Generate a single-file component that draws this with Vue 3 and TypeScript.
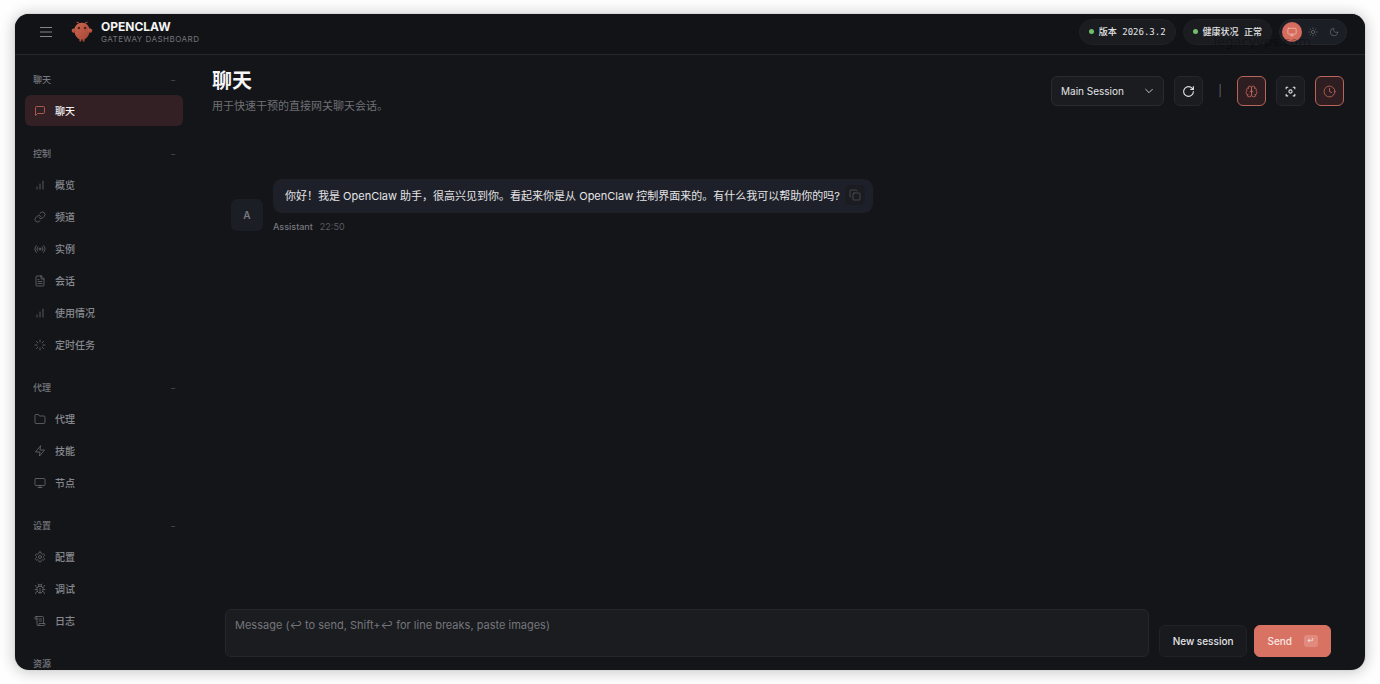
<script setup lang="ts">
import { ref } from 'vue'

interface NavItem {
  label: string
  icon: string
}
interface NavGroup {
  title: string
  items: NavItem[]
}

const icons: Record<string, string[]> = {
  message: ['M21 15a2 2 0 0 1-2 2H7l-4 4V5a2 2 0 0 1 2-2h14a2 2 0 0 1 2 2z'],
  bars: ['M12 20V10', 'M18 20V4', 'M6 20v-4'],
  link: [
    'M10 13a5 5 0 0 0 7.54.54l3-3a5 5 0 0 0-7.07-7.07l-1.72 1.71',
    'M14 11a5 5 0 0 0-7.54-.54l-3 3a5 5 0 0 0 7.07 7.07l1.71-1.71',
  ],
  radio: [
    'M4.9 19.1C1 15.2 1 8.8 4.9 4.9',
    'M7.8 16.2c-2.3-2.3-2.3-6.1 0-8.5',
    'M14 12a2 2 0 1 1-4 0a2 2 0 0 1 4 0',
    'M16.2 7.8c2.3 2.3 2.3 6.1 0 8.5',
    'M19.1 4.9C23 8.8 23 15.1 19.1 19',
  ],
  file: [
    'M14.5 2H6a2 2 0 0 0-2 2v16a2 2 0 0 0 2 2h12a2 2 0 0 0 2-2V7.5L14.5 2z',
    'M14 2v6h6',
    'M16 13H8',
    'M16 17H8',
    'M10 9H8',
  ],
  loader: [
    'M12 2v4',
    'M12 18v4',
    'M4.93 4.93l2.83 2.83',
    'M16.24 16.24l2.83 2.83',
    'M2 12h4',
    'M18 12h4',
    'M4.93 19.07l2.83-2.83',
    'M16.24 7.76l2.83-2.83',
  ],
  folder: ['M22 19a2 2 0 0 1-2 2H4a2 2 0 0 1-2-2V5a2 2 0 0 1 2-2h5l2 3h9a2 2 0 0 1 2 2z'],
  zap: ['M13 2L3 14h9l-1 8 10-12h-9l1-8z'],
  monitor: ['M4 3h16a2 2 0 0 1 2 2v10a2 2 0 0 1-2 2H4a2 2 0 0 1-2-2V5a2 2 0 0 1 2-2z', 'M8 21h8', 'M12 17v4'],
  settings: [
    'M12.22 2h-.44a2 2 0 0 0-2 2v.18a2 2 0 0 1-1 1.73l-.43.25a2 2 0 0 1-2 0l-.15-.08a2 2 0 0 0-2.73.73l-.22.38a2 2 0 0 0 .73 2.73l.15.1a2 2 0 0 1 1 1.72v.51a2 2 0 0 1-1 1.74l-.15.09a2 2 0 0 0-.73 2.73l.22.38a2 2 0 0 0 2.73.73l.15-.08a2 2 0 0 1 2 0l.43.25a2 2 0 0 1 1 1.73V20a2 2 0 0 0 2 2h.44a2 2 0 0 0 2-2v-.18a2 2 0 0 1 1-1.73l.43-.25a2 2 0 0 1 2 0l.15.08a2 2 0 0 0 2.73-.73l.22-.39a2 2 0 0 0-.73-2.73l-.15-.08a2 2 0 0 1-1-1.74v-.5a2 2 0 0 1 1-1.74l.15-.09a2 2 0 0 0 .73-2.73l-.22-.38a2 2 0 0 0-2.73-.73l-.15.08a2 2 0 0 1-2 0l-.43-.25a2 2 0 0 1-1-1.73V4a2 2 0 0 0-2-2z',
    'M15 12a3 3 0 1 1-6 0a3 3 0 0 1 6 0',
  ],
  bug: [
    'M8 2l1.88 1.88',
    'M14.12 3.88L16 2',
    'M9 7.13v-1a3 3 0 1 1 6 0v1',
    'M12 20c-3.3 0-6-2.7-6-6v-3a4 4 0 0 1 4-4h4a4 4 0 0 1 4 4v3c0 3.3-2.7 6-6 6',
    'M12 20v-9',
    'M6.53 9C4.6 8.8 3 7.1 3 5',
    'M6 13H2',
    'M3 21c0-2.1 1.7-3.9 3.8-4',
    'M20.97 5c0 2.1-1.6 3.8-3.5 4',
    'M22 13h-4',
    'M17.2 17c2.1.1 3.8 1.9 3.8 4',
  ],
  scroll: [
    'M8 21h12a2 2 0 0 0 2-2v-2H10v2a2 2 0 1 1-4 0V5a2 2 0 1 0-4 0v3h4',
    'M19 17V5a2 2 0 0 0-2-2H4',
    'M15 8h-5',
    'M15 12h-5',
  ],
  sun: [
    'M16 12a4 4 0 1 1-8 0a4 4 0 0 1 8 0',
    'M12 2v2',
    'M12 20v2',
    'M4.93 4.93l1.41 1.41',
    'M17.66 17.66l1.41 1.41',
    'M2 12h2',
    'M20 12h2',
    'M6.34 17.66l-1.41 1.41',
    'M19.07 4.93l-1.41 1.41',
  ],
  moon: ['M20.98 12.49a9 9 0 1 1-9.47-9.47c.4-.02.62.46.4.8a6 6 0 0 0 8.27 8.27c.34-.22.82 0 .8.4'],
}

const groups: NavGroup[] = [
  { title: '聊天', items: [{ label: '聊天', icon: 'message' }] },
  {
    title: '控制',
    items: [
      { label: '概览', icon: 'bars' },
      { label: '频道', icon: 'link' },
      { label: '实例', icon: 'radio' },
      { label: '会话', icon: 'file' },
      { label: '使用情况', icon: 'bars' },
      { label: '定时任务', icon: 'loader' },
    ],
  },
  {
    title: '代理',
    items: [
      { label: '代理', icon: 'folder' },
      { label: '技能', icon: 'zap' },
      { label: '节点', icon: 'monitor' },
    ],
  },
  {
    title: '设置',
    items: [
      { label: '配置', icon: 'settings' },
      { label: '调试', icon: 'bug' },
      { label: '日志', icon: 'scroll' },
    ],
  },
  { title: '资源', items: [] },
]

const themes = [
  { name: 'System', icon: 'monitor' },
  { name: 'Light', icon: 'sun' },
  { name: 'Dark', icon: 'moon' },
]

const theme = ref('System')
const session = ref('main')
const draft = ref('')
</script>

<template>
  <div class="shell">
    <header class="topbar">
      <button class="burger" type="button" aria-label="Toggle navigation">
        <svg viewBox="0 0 12 12"><path d="M0 1.5h12M0 6h12M0 10.5h12" /></svg>
      </button>
      <svg class="logo" viewBox="0 0 120 120" aria-hidden="true">
        <defs>
          <linearGradient id="claw" x1="0" y1="0" x2="1" y2="1">
            <stop offset="0" stop-color="#cf6650" />
            <stop offset="1" stop-color="#a04535" />
          </linearGradient>
        </defs>
        <path
          fill="url(#claw)"
          d="M60 10C32 10 18 33 18 53s14 40 28 47v12h10v-11s4 1 8 0v11h10v-12c14-7 28-27 28-47S88 10 60 10z"
        />
        <path fill="url(#claw)" d="M22 42C8 38 1 47 5 57s14 9 20 0c3-7 3-13-3-15z" />
        <path fill="url(#claw)" d="M98 42c14-4 21 5 17 15s-14 9-20 0c-3-7-3-13 3-15z" />
        <path fill="none" stroke="#b35845" stroke-width="6" stroke-linecap="round" d="M45 16Q40 6 32 7M75 16Q80 6 88 7" />
        <circle cx="43" cy="38" r="7" fill="#54231b" />
        <circle cx="77" cy="38" r="7" fill="#54231b" />
      </svg>
      <div class="brand">
        <strong>OPENCLAW</strong>
        <span>GATEWAY DASHBOARD</span>
      </div>
      <div class="status">
        <span class="pill"><i class="dot"></i>版本 2026.3.2</span>
        <span class="pill"><i class="dot"></i>健康状况 正常</span>
        <div class="themes" role="group" aria-label="Theme">
          <button
            v-for="t in themes"
            :key="t.name"
            type="button"
            :class="{ on: theme === t.name }"
            :aria-label="t.name"
            @click="theme = t.name"
          >
            <svg class="icon" viewBox="0 0 24 24"><path v-for="d in icons[t.icon]" :key="d" :d="d" /></svg>
          </button>
        </div>
        <span class="watermark">legacyvps.com</span>
      </div>
    </header>

    <div class="body">
      <nav class="side">
        <section v-for="(g, gi) in groups" :key="g.title" class="group">
          <button class="group-head" type="button">
            <span>{{ g.title }}</span><span v-if="g.items.length" class="dash">–</span>
          </button>
          <a v-for="it in g.items" :key="it.label" href="#" class="item" :class="{ active: gi === 0 }">
            <svg class="icon" viewBox="0 0 24 24"><path v-for="d in icons[it.icon]" :key="d" :d="d" /></svg>
            <span>{{ it.label }}</span>
          </a>
        </section>
      </nav>

      <main class="main">
        <div class="head">
          <div>
            <h1>聊天</h1>
            <p>用于快速干预的直接网关聊天会话。</p>
          </div>
          <div class="tools">
            <div class="select">
              <select v-model="session" aria-label="Session">
                <option value="main">Main Session</option>
              </select>
              <svg class="icon" viewBox="0 0 24 24"><path d="M4 8l8 8 8-8" /></svg>
            </div>
            <button class="tool" type="button" aria-label="Refresh">
              <svg class="icon" viewBox="0 0 24 24">
                <path d="M21 12a9 9 0 1 1-9-9c2.52 0 4.93 1 6.74 2.74L21 8" />
                <path d="M21 3v5h-5" />
              </svg>
            </button>
            <span class="bar">|</span>
            <button class="tool on" type="button" aria-label="Toggle thinking">
              <svg class="icon" viewBox="0 0 24 24">
                <path d="M12 5a3 3 0 1 0-5.997.125 4 4 0 0 0-2.526 5.77 4 4 0 0 0 .556 6.588A4 4 0 1 0 12 18Z" />
                <path d="M12 5a3 3 0 1 1 5.997.125 4 4 0 0 1 2.526 5.77 4 4 0 0 1-.556 6.588A4 4 0 1 1 12 18Z" />
                <path d="M15 13a4.5 4.5 0 0 1-3-4 4.5 4.5 0 0 1-3 4" />
                <path d="M17.599 6.5a3 3 0 0 0 .399-1.375M6.003 5.125A3 3 0 0 0 6.401 6.5" />
                <path d="M6 18a4 4 0 0 1-1.967-.516M19.967 17.484A4 4 0 0 1 18 18" />
              </svg>
            </button>
            <button class="tool" type="button" aria-label="Focus mode">
              <svg class="icon" viewBox="0 0 24 24">
                <path d="M4 7V4h3M17 4h3v3M20 17v3h-3M7 20H4v-3" />
                <circle cx="12" cy="12" r="3" />
              </svg>
            </button>
            <button class="tool on" type="button" aria-label="Show scheduled sessions">
              <svg class="icon" viewBox="0 0 24 24">
                <circle cx="12" cy="12" r="10" />
                <path d="M12 6v6l4 2" />
              </svg>
            </button>
          </div>
        </div>

        <div class="thread">
          <div class="avatar">A</div>
          <div class="msg">
            <div class="bubble">
              <span>你好！我是 OpenClaw 助手，很高兴见到你。看起来你是从 OpenClaw 控制界面来的。有什么我可以帮助你的吗?</span>
              <button type="button" class="copy" aria-label="Copy">
                <svg class="icon" viewBox="0 0 24 24">
                  <rect x="8" y="8" width="14" height="14" rx="2" />
                  <path d="M4 16c-1.1 0-2-.9-2-2V4c0-1.1.9-2 2-2h10c1.1 0 2 .9 2 2" />
                </svg>
              </button>
            </div>
            <div class="meta"><b>Assistant</b><time>22:50</time></div>
          </div>
        </div>

        <form class="compose" @submit.prevent>
          <textarea
            v-model="draft"
            aria-label="Message"
            placeholder="Message (↩ to send, Shift+↩ for line breaks, paste images)"
          ></textarea>
          <button type="button" class="new">New session</button>
          <button type="submit" class="send">Send <kbd>↵</kbd></button>
        </form>
      </main>
    </div>
  </div>
</template>

<style>
html,
body {
  background: #fefefe;
}
body {
  margin: 0;
}
</style>

<style scoped>
* {
  box-sizing: border-box;
}
.shell {
  display: flex;
  flex-direction: column;
  height: calc(100vh - 28px);
  margin: 14px 15px;
  overflow: hidden;
  border-radius: 14px;
  background: #131519;
  color: #e4e4e7;
  font: 11px/16px Inter, 'Noto Sans CJK SC', sans-serif;
  box-shadow: 0 0 0 1px #d8d8d8, 0 1px 14px 2px rgba(0, 0, 0, 0.2);
}
button,
select,
textarea {
  margin: 0;
  padding: 0;
  border: 0;
  background: none;
  color: inherit;
  font: inherit;
}
.icon {
  display: block;
  flex: none;
  width: 12px;
  height: 12px;
  fill: none;
  stroke: currentColor;
  stroke-width: 1.5;
  stroke-linecap: round;
  stroke-linejoin: round;
}
.topbar {
  display: flex;
  flex: none;
  align-items: center;
  height: 41px;
  padding: 0 18px 5px 25px;
  border-bottom: 1px solid #25272b;
  background: #111317;
}
.burger svg {
  display: block;
  width: 12px;
  height: 12px;
  stroke: #85868a;
  fill: none;
}
.logo {
  width: 22px;
  height: 22px;
  margin: 0 8px 0 19px;
}
.brand {
  display: flex;
  flex-direction: column;
}
.brand strong {
  color: #f4f4f5;
  font-size: 12px;
  font-weight: 700;
  line-height: 14px;
}
.brand span {
  color: #74757a;
  font-size: 8px;
  line-height: 10px;
  letter-spacing: 0.06em;
}
.status {
  position: relative;
  display: flex;
  gap: 7px;
  margin-left: auto;
}
.pill {
  display: flex;
  align-items: center;
  gap: 5px;
  height: 26px;
  padding: 0 9px;
  border: 1px solid #1f2126;
  border-radius: 13px;
  background: #1a1c20;
  font-family: 'DejaVu Sans Mono', 'Noto Sans CJK SC', monospace;
  font-size: 9px;
  font-weight: 500;
  white-space: pre;
}
.dot {
  width: 5px;
  height: 5px;
  border-radius: 50%;
  background: #72bf6a;
}
.themes {
  display: flex;
  align-items: center;
  gap: 1px;
  height: 26px;
  padding: 0 2px;
  border: 1px solid #24262c;
  border-radius: 13px;
  background: #1c1e25;
}
.themes button {
  display: grid;
  place-items: center;
  width: 20px;
  height: 20px;
  border-radius: 50%;
  color: #77787e;
}
.themes button.on {
  background: #d56c5d;
  color: #f7cfc6;
}
.themes .icon {
  width: 10px;
  height: 10px;
}
.watermark {
  position: absolute;
  right: 36px;
  bottom: -5px;
  color: rgba(0, 0, 0, 0.3);
  font: 13px/16px 'DejaVu Sans', sans-serif;
  pointer-events: none;
}
.body {
  display: flex;
  flex: 1;
  min-height: 0;
}
.side {
  flex: none;
  width: 178px;
  padding: 14px 10px 0;
  overflow: hidden;
}
.group {
  display: flex;
  flex-direction: column;
  gap: 1px;
  margin-bottom: 17px;
}
.group-head {
  display: flex;
  align-items: center;
  justify-content: space-between;
  height: 22px;
  margin-bottom: 3px;
  padding: 0 8px;
  color: #77787d;
  font-size: 9px;
  font-weight: 500;
}
.dash {
  color: #4b4c51;
  font-size: 8px;
}
.item {
  display: flex;
  align-items: center;
  gap: 9px;
  height: 31px;
  padding: 0 9px;
  border-radius: 6px;
  color: #88898e;
  font-size: 10px;
  font-weight: 500;
  text-decoration: none;
}
.item .icon {
  color: #6e6f74;
}
.item.active {
  background: #322024;
  color: #f1f1f3;
}
.item.active .icon {
  color: #d26b5e;
}
.main {
  display: flex;
  flex: 1;
  flex-direction: column;
  min-width: 0;
}
.head {
  display: flex;
  justify-content: space-between;
  padding: 11px 21px 0 19px;
}
h1 {
  margin: 1px 0 0;
  color: #f6f6f7;
  font-size: 20px;
  font-weight: 600;
  line-height: 28px;
}
p {
  margin: 3px 0 0;
  color: #6f7075;
}
.tools {
  display: flex;
  align-items: center;
  gap: 10px;
  height: 30px;
  margin-top: 10px;
}
.select {
  position: relative;
}
.select select {
  display: block;
  width: 113px;
  height: 30px;
  padding: 0 9px;
  border: 1px solid #292b30;
  border-radius: 6px;
  background: #1a1c20;
  font-size: 10px;
  appearance: none;
}
.select .icon {
  position: absolute;
  top: 10px;
  right: 10px;
  width: 10px;
  height: 10px;
  stroke-width: 2;
  pointer-events: none;
}
.tool {
  display: grid;
  place-items: center;
  width: 29px;
  height: 30px;
  border: 1px solid #25272b;
  border-radius: 6px;
  background: #1a1c20;
}
.tool .icon {
  width: 13px;
  height: 13px;
  stroke-width: 2;
}
.tool.on {
  border-color: #b9655a;
  background: #2f1e21;
  color: #c4695d;
}
.tool.on .icon {
  stroke-width: 1.5;
}
.bar {
  width: 14px;
  color: #66676b;
  text-align: center;
}
.thread {
  display: flex;
  align-items: flex-end;
  align-self: flex-start;
  gap: 10px;
  padding: 65px 34px 0 38px;
}
.avatar {
  display: grid;
  place-items: center;
  flex: none;
  width: 32px;
  height: 32px;
  margin-bottom: 3px;
  border-radius: 6px;
  background: #1c1e25;
  color: #77787e;
  font-size: 10px;
  font-weight: 600;
}
.bubble {
  display: flex;
  align-items: center;
  gap: 5px;
  min-height: 34px;
  padding: 0 8px 0 12px;
  border-radius: 9px;
  background: #1e2029;
}
.copy {
  display: grid;
  place-items: center;
  width: 20px;
  height: 20px;
  margin-bottom: 2px;
  border-radius: 5px;
  background: #1a1c21;
  color: #55565c;
}
.meta {
  display: flex;
  gap: 7px;
  margin-top: 7px;
  color: #77787d;
  font-size: 9px;
  line-height: 14px;
}
.meta b {
  font-weight: 500;
}
.meta time {
  color: #5a5b60;
}
.compose {
  display: flex;
  align-items: flex-end;
  margin-top: auto;
  padding: 0 34px 13px 32px;
}
textarea {
  flex: 1;
  min-width: 0;
  height: 48px;
  margin-right: 10px;
  padding: 7px 9px;
  border: 1px solid #25272b;
  border-radius: 6px;
  background: #1a1c20;
  resize: none;
}
textarea::placeholder {
  color: #75767b;
}
.new,
.send {
  display: flex;
  align-items: center;
  height: 32px;
  padding: 0 13px;
  border: 1px solid #202226;
  border-radius: 6px;
  background: #181a1e;
  font-size: 10px;
  font-weight: 500;
}
.send {
  gap: 12px;
  margin-left: 7px;
  padding: 0 12px;
  border-color: #d87364;
  background: #d87364;
  color: #fbe6e1;
}
kbd {
  width: 14px;
  height: 12px;
  border-radius: 3px;
  background: #e08b7e;
  font: 8px/12px 'DejaVu Sans', sans-serif;
  text-align: center;
}
</style>
